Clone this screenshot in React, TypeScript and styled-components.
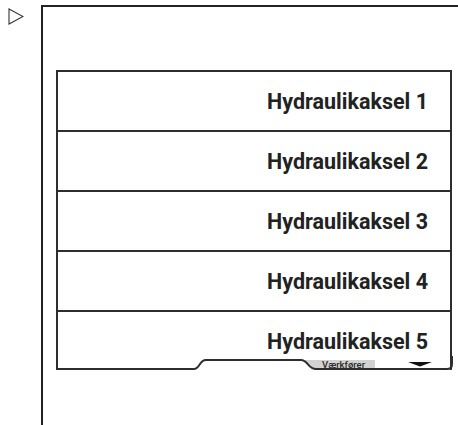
import styled, { createGlobalStyle } from 'styled-components';

const GlobalStyle = createGlobalStyle`
  html, body {
    margin: 0;
    padding: 0;
    background: #fff;
    overflow: hidden;
  }
  body {
    font-family: Roboto, "Liberation Sans", sans-serif;
  }
`;

const Page = styled.div`
  display: flex;
  align-items: flex-start;
  gap: 17px;
  padding: 5px 0 0 8px;
  width: 100%;
  height: 425px;
  box-sizing: border-box;
`;

const PlayIcon = styled.svg`
  flex: none;
  margin-top: 3px;
`;

const Frame = styled.div`
  flex: 1 1 auto;
  min-width: 0;
  height: 440px;
  border-left: 2px solid #222;
  border-top: 2px solid #222;
  padding: 63px 0 0 13px;
  box-sizing: border-box;
`;

const List = styled.ul`
  list-style: none;
  margin: 0;
  padding: 0;
  width: 396px;
  border: 2px solid #2e2e2e;
  border-bottom: none;
  box-sizing: border-box;
`;

const Row = styled.li<{ $last?: boolean }>`
  display: flex;
  align-items: center;
  justify-content: flex-end;
  height: 58px;
  padding-right: 22px;
  border-bottom: ${({ $last }) => ($last ? 'none' : '2px solid #2e2e2e')};
  font-size: 21.5px;
  font-weight: 700;
  color: #222;
`;

const Footer = styled.div`
  position: relative;
  display: flex;
  align-items: center;
  justify-content: flex-end;
  height: 12px;
  margin-top: -12px;
  padding-right: 18px;
`;

const FooterOutline = styled.svg`
  position: absolute;
  left: 0;
  top: 0;
  overflow: visible;
`;

const Label = styled.span`
  position: relative;
  font-size: 9.5px;
  font-weight: 500;
  line-height: 9px;
  color: #2a2a2a;
  margin-right: 43px;
`;

const Arrow = styled.svg`
  position: relative;
  margin-top: 1px;
`;

const items = [1, 2, 3, 4, 5].map((n) => `Hydraulikaksel ${n}`);

export default function App() {
  return (
    <>
      <GlobalStyle />
      <Page>
        <PlayIcon width="16" height="17" viewBox="0 0 16 17">
          <polygon points="1,1 15,8.5 1,16" fill="none" stroke="#333" strokeWidth="1.1" />
        </PlayIcon>
        <Frame>
          <List>
            {items.map((item, i) => (
              <Row key={item} $last={i === items.length - 1}>
                {item}
              </Row>
            ))}
            <Footer>
              <FooterOutline width="392" height="12">
                <path d="M243 2 C249 2 250 10 258 10 H317 V2 Z" fill="#d2d2d2" />
                <path
                  d="M-2 11 H136 C142 11 141 2 148 2 H243 C250 2 250 11 258 11 H389 Q394 11 394 6 V-2"
                  fill="none"
                  stroke="#2e2e2e"
                  strokeWidth="2"
                />
              </FooterOutline>
              <Label>Værkfører</Label>
              <Arrow width="24" height="5" viewBox="0 0 24 5">
                <polygon points="0,0 24,0 12,4.5" fill="#111" />
              </Arrow>
            </Footer>
          </List>
        </Frame>
      </Page>
    </>
  );
}
